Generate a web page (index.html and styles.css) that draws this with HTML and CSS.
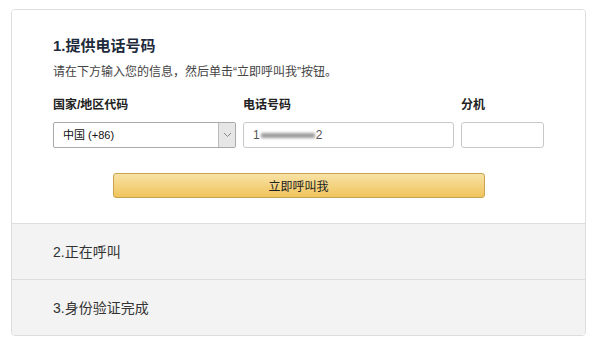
FILE: index.html
```html
<!DOCTYPE html>
<html>
<head>
  <title>身份验证</title>
  <link rel="stylesheet" href="styles.css">
</head>
<body>
  <div class="card">
    <div class="step active">
      <h2>1.提供电话号码</h2>
      <p class="hint">请在下方输入您的信息，然后单击“立即呼叫我”按钮。</p>

      <div class="fields">
        <label>国家/地区代码</label>
        <label>电话号码</label>
        <label>分机</label>

        <div class="select">
          <span>中国 (+86)</span>
          <span class="arrow">
            <svg width="9" height="6" viewBox="0 0 9 6"><path d="M1 1 L4.5 4.5 L8 1" fill="none" stroke="#888" stroke-width="1"/></svg>
          </span>
        </div>
        <div class="input">1<span class="masked"></span>2</div>
        <div class="input"></div>
      </div>

      <button class="call">立即呼叫我</button>
    </div>

    <div class="step">2.正在呼叫</div>
    <div class="step">3.身份验证完成</div>
  </div>
</body>
</html>
```

FILE: styles.css
```css
body {
  margin: 0;
  background: #fff;
  font-family: "Liberation Sans", "Noto Sans CJK SC", sans-serif;
  color: #333;
}
.card {
  margin: 9px 0 0 11px;
  width: 573px;
  border: 1px solid #ddd;
  border-radius: 4px;
  overflow: hidden;
}
.step {
  height: 53px;
  line-height: 53px;
  padding: 2px 41px 0;
  background: #f3f3f3;
  border-top: 1px solid #ddd;
  font-size: 14px;
  color: #333;
}
.step.active {
  height: auto;
  line-height: normal;
  background: #fff;
  border-top: none;
  padding: 26px 41px 25px;
}
h2 {
  margin: 0;
  font-size: 15px;
  line-height: 20px;
  color: #1e2b3c;
}
.hint {
  margin: 7px 0 0;
  font-size: 12px;
  line-height: 18px;
  color: #444;
}
.fields {
  display: grid;
  grid-template-columns: 183px 211px 83px;
  column-gap: 7px;
  row-gap: 8px;
  margin-top: 15px;
}
label {
  font-size: 12px;
  line-height: 18px;
  font-weight: bold;
  color: #222;
}
.select {
  display: flex;
  height: 24px;
  border: 1px solid #aaa;
  border-radius: 2px;
  font-size: 11px;
  color: #111;
}
.select span:first-child {
  flex: 1;
  line-height: 24px;
  padding-left: 9px;
}
.arrow {
  width: 16px;
  display: flex;
  align-items: center;
  justify-content: center;
  background: #e6e6e6;
  border-left: 1px solid #bbb;
}
.input {
  height: 24px;
  line-height: 24px;
  border: 1px solid #c8c8c8;
  border-radius: 3px;
  padding-left: 9px;
  font-size: 12px;
  color: #555;
  display: flex;
  align-items: center;
}
.masked {
  display: inline-block;
  width: 54px;
  height: 5px;
  margin: 0 1px;
  background: #9a9a9a;
  filter: blur(1.5px);
}
.call {
  display: block;
  width: 372px;
  height: 25px;
  margin: 25px auto 0;
  border: 1px solid #c9a34e;
  border-radius: 3px;
  background: linear-gradient(#f8e2a6, #f0c45c);
  font-family: inherit;
  font-size: 12px;
  color: #222;
  cursor: pointer;
}
```
